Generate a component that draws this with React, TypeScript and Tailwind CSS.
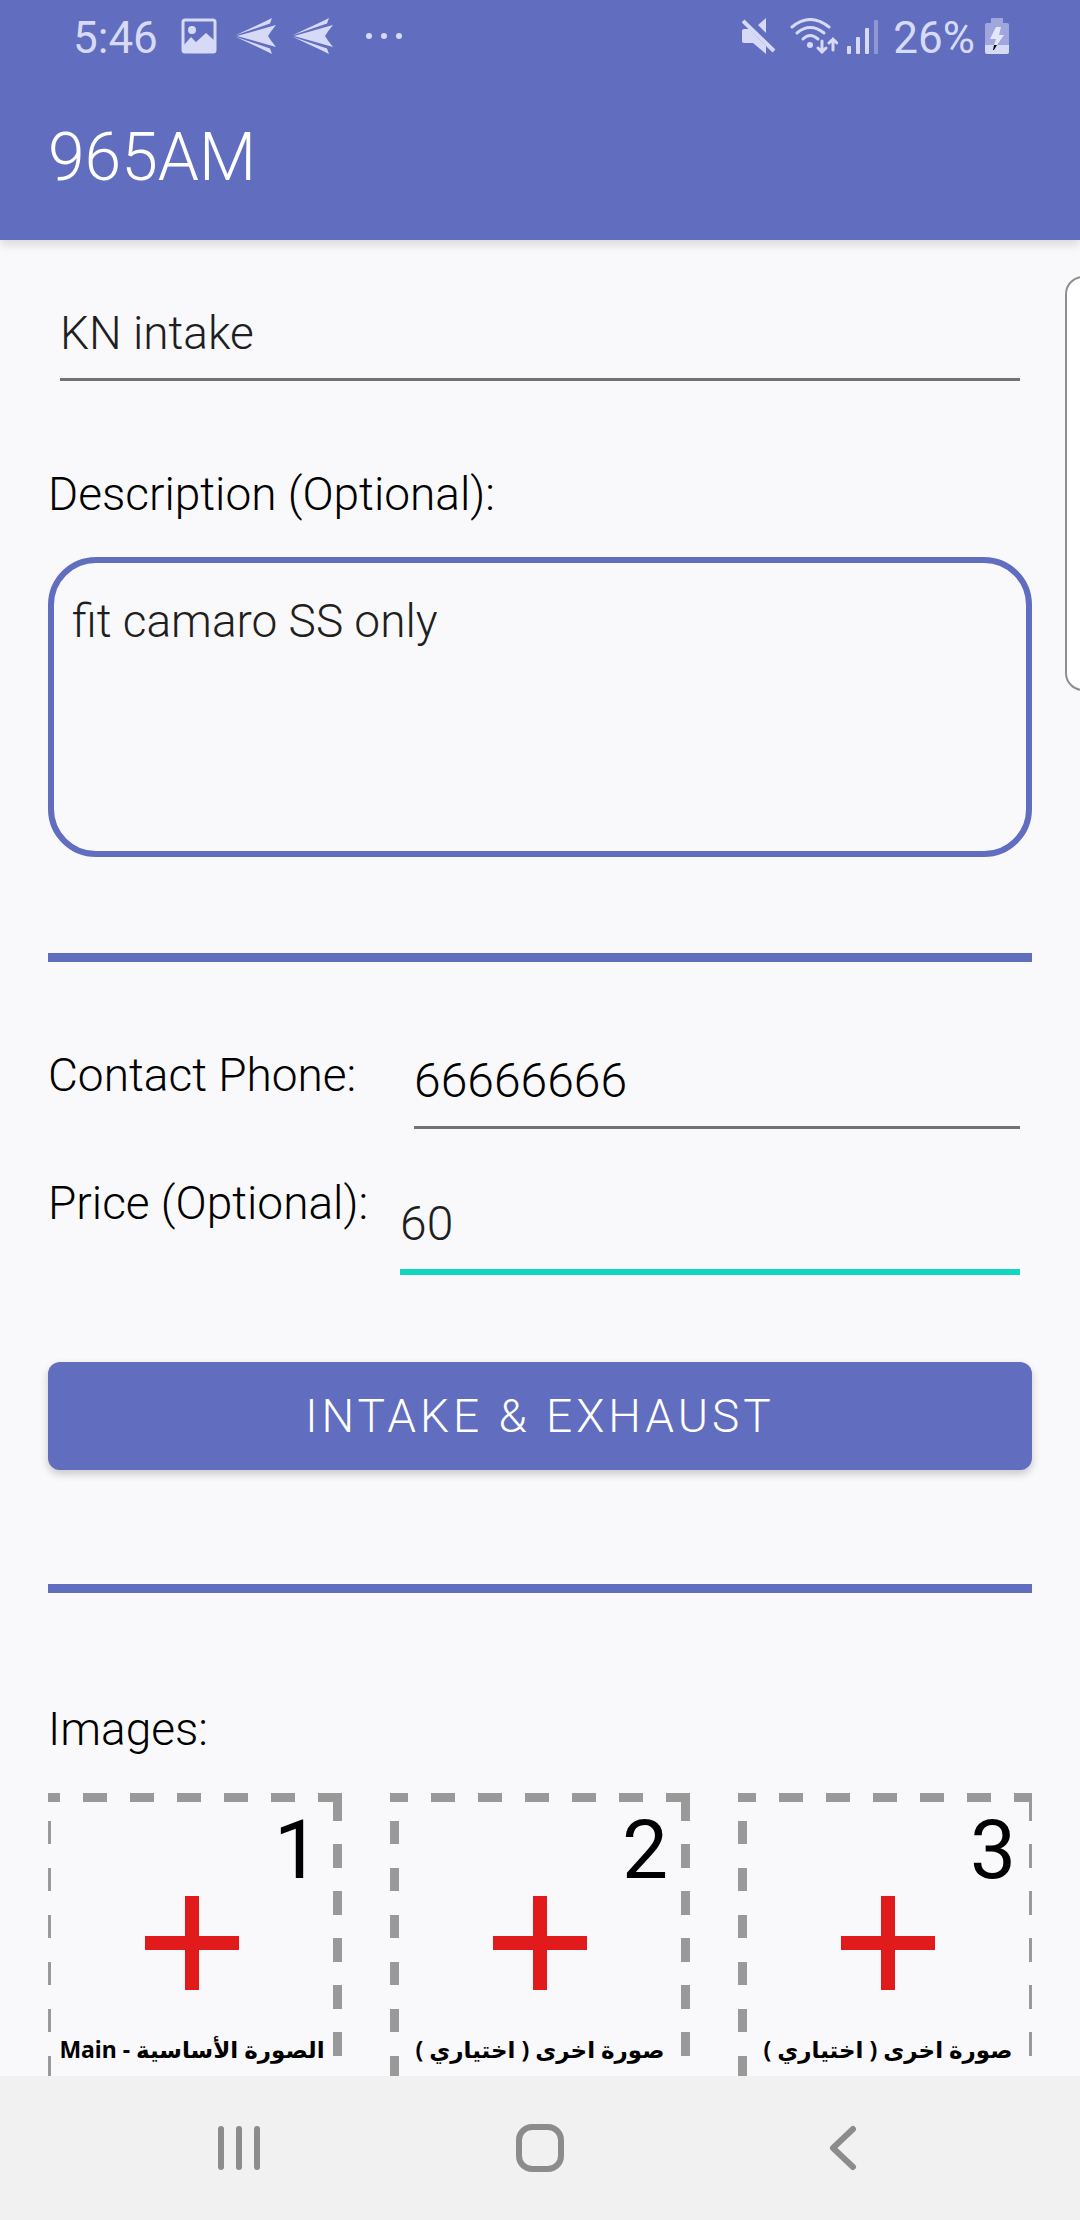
import { useState } from 'react';

const labelClass = 'text-[46px] leading-[56px] font-light text-black';

const SendIcon = () => (
	<svg className="h-9 w-[41px]" viewBox="0 0 41 36" fill="currentColor">
		<path d="M0 17.5L30 3.5L37 0L35 5.5Z" />
		<path d="M2 18L41 7Q36 13 33 18Q36 23 41 29Z" />
		<path d="M0 18.5L30 32.5L37 36L35 30.5Z" />
	</svg>
);

const StatusBar = () => (
	<div className="flex h-[72px] items-center justify-between pl-[73px] pr-[71px] text-[44px] text-[#d7daf6]">
		<div className="flex items-center">
			<span className="w-[108px] pt-1 leading-[52px]">5:46</span>
			<svg className="h-9 w-9" viewBox="0 0 36 36">
				<rect x="2" y="2" width="32" height="32" rx="2" fill="none" stroke="currentColor" strokeWidth="3" />
				<circle cx="11" cy="12" r="4" fill="currentColor" />
				<path fill="currentColor" d="M3 27L10 19L15 24L25 15L34 23V34H3Z" />
			</svg>
			<div className="ml-[18px] flex gap-4">
				<SendIcon />
				<SendIcon />
			</div>
			<svg className="ml-8 h-9 w-[38px]" viewBox="0 0 38 36" fill="currentColor">
				<circle cx="4" cy="18" r="3" />
				<circle cx="19" cy="18" r="3" />
				<circle cx="34" cy="18" r="3" />
			</svg>
		</div>
		<div className="flex items-center">
			<svg className="h-9 w-[34px]" viewBox="0 0 34 36">
				<path fill="currentColor" d="M0 13Q0 11 2 11H7L24 28V36L11 25H2Q0 25 0 23Z" />
				<path fill="currentColor" d="M16 7L24 0V15Z" />
				<path stroke="currentColor" strokeWidth="4" d="M1 3L32 33" />
			</svg>
			<svg className="ml-[14px] h-9 w-12" viewBox="0 0 48 36" fill="none" stroke="currentColor" strokeWidth="3" strokeLinecap="round">
				<path d="M2 9Q20 -6 39 9" />
				<path d="M7 15Q20 4 34 15" />
				<path d="M13 21Q20 14 28 21" />
				<circle cx="20" cy="27" r="3" fill="currentColor" stroke="none" />
				<path d="M32 23V34M28 30L32 34L36 30M43 32V21M39 25L43 21L47 25" />
			</svg>
			<svg className="ml-[9px] h-9 w-8" viewBox="0 0 32 36" fill="currentColor">
				<rect x="0" y="28" width="4" height="8" rx="1" />
				<rect x="9" y="19" width="4" height="17" rx="1" />
				<rect x="18" y="10" width="4" height="26" rx="1" />
				<rect x="27" y="2" width="4" height="34" rx="1" opacity="0.4" />
			</svg>
			<span className="ml-[14px] mr-[10px] pt-1 leading-[52px]">26%</span>
			<svg className="h-9 w-6" viewBox="0 0 24 36">
				<path fill="#9fa7dc" d="M6 0H18V5H22Q24 5 24 7V27H0V7Q0 5 2 5H6Z" />
				<path fill="currentColor" d="M0 27H24V34Q24 36 22 36H2Q0 36 0 34Z" />
				<path fill="#e4e7fb" d="M11 9H16L14 17H19L12 27H9L11 21H5Z" />
				<path fill="#111" d="M9 27H12L9 32H8Z" />
			</svg>
		</div>
	</div>
);

const Divider = () => <hr className="h-[9px] border-0 bg-[#616dbf]" />;

// dashes are 24px long with a 23px gap, starting from the right edge
const ImageSlot = ({ number, caption, dir }: { number: number; caption: string; dir: 'ltr' | 'rtl' }) => (
	<button type="button" className="grid w-[300px] shrink-0 text-black">
		<svg className="col-start-1 row-start-1 h-[300px] w-[300px]" viewBox="0 0 300 300" stroke="#999999" strokeWidth="9">
			<path strokeDasharray="24 23" d="M300 4.500H0" />
			<path strokeDasharray="24 23" strokeDashoffset="-4" d="M295.500 0V300" />
			<path d="M295.500 0V28" />
			<path strokeDasharray="23 24" d="M4.500 28V300" />
			<path stroke="#e11b1b" strokeWidth="14" d="M103 150H197M150 103V197" />
		</svg>
		<span className="col-start-1 row-start-1 flex flex-col justify-between pt-4 pb-7">
			<span className="pr-[22px] text-right text-[82px] leading-none">{number}</span>
			<span dir={dir} className="text-center font-['Noto_Sans','DejaVu_Sans',sans-serif] text-[23px] leading-8 font-bold">
				{caption}
			</span>
		</span>
	</button>
);

const slots = [
	{ number: 1, caption: 'Main - الصورة الأساسية', dir: 'ltr' as const },
	{ number: 2, caption: 'صورة اخرى ( اختياري )', dir: 'rtl' as const },
	{ number: 3, caption: 'صورة اخرى ( اختياري )', dir: 'rtl' as const },
];

const NavBar = () => (
	<nav className="flex h-36 shrink-0 items-center justify-between bg-[#f1f1f1] px-[215px] text-[#8c8c8c]">
		<button type="button" aria-label="Recent apps">
			<svg className="h-12 w-12" viewBox="0 0 48 48" stroke="currentColor" strokeWidth="6" strokeLinecap="round">
				<path d="M6 5V43M24 5V43M42 5V43" />
			</svg>
		</button>
		<button type="button" aria-label="Home">
			<svg className="h-12 w-12" viewBox="0 0 48 48" fill="none" stroke="currentColor" strokeWidth="6">
				<rect x="3" y="3" width="42" height="42" rx="13" />
			</svg>
		</button>
		<button type="button" aria-label="Back">
			<svg className="h-12 w-12" viewBox="0 0 48 48" fill="none" stroke="currentColor" strokeWidth="6" strokeLinecap="round" strokeLinejoin="round">
				<path d="M36 5L16 24L36 43" />
			</svg>
		</button>
	</nav>
);

export default function App() {
	const [name, setName] = useState('KN intake');
	const [description, setDescription] = useState('fit camaro SS only');
	const [phone, setPhone] = useState('66666666');
	const [price, setPrice] = useState('60');

	return (
		<div className="relative flex h-screen flex-col overflow-hidden bg-[#f9f9fc] font-['Roboto',sans-serif]">
			<header className="z-10 shrink-0 bg-[#616dbf] shadow-[0_4px_10px_rgba(0,0,0,0.14)]">
				<StatusBar />
				<div className="flex h-[168px] items-center px-12 pt-1">
					<h1 className="text-[66px] leading-[80px] font-light text-white">965AM</h1>
				</div>
			</header>

			<main className="min-h-0 flex-1 overflow-hidden px-12 pt-15">
				<div className="px-3">
					<input
						aria-label="Title"
						className="block h-[81px] w-full border-b-[3px] border-[#727275] pb-3 text-[46px] font-light text-[#1f1f21] outline-none"
						value={name}
						onChange={(e) => setName(e.target.value)}
					/>
				</div>

				<label htmlFor="description" className={`mt-[85px] block ${labelClass}`}>
					Description (Optional):
				</label>
				<textarea
					id="description"
					className="mt-[35px] mb-24 block h-[300px] w-full resize-none rounded-[48px] border-6 border-[#616dbf] px-[18px] py-[30px] text-[46px] leading-[56px] font-light text-[#1f1f21] outline-none"
					value={description}
					onChange={(e) => setDescription(e.target.value)}
				/>

				<Divider />

				<div className="mt-[85px] flex pr-3">
					<label htmlFor="phone" className={`w-[366px] shrink-0 ${labelClass}`}>
						Contact Phone:
					</label>
					<input
						id="phone"
						type="tel"
						className="h-[82px] min-w-0 flex-1 border-b-[3px] border-[#727275] pb-3 text-[48px] font-light text-black outline-none"
						value={phone}
						onChange={(e) => setPhone(e.target.value)}
					/>
				</div>

				<div className="mt-[46px] flex pr-3">
					<label htmlFor="price" className={`w-[352px] shrink-0 ${labelClass}`}>
						Price (Optional):
					</label>
					<input
						id="price"
						inputMode="decimal"
						className="mt-4 h-[84px] min-w-0 flex-1 border-b-6 border-[#12d6c0] pb-[14px] text-[48px] font-light text-[#1f1f21] outline-none"
						value={price}
						onChange={(e) => setPrice(e.target.value)}
					/>
				</div>

				<button
					type="button"
					className="mt-[87px] mb-[114px] block h-[108px] w-full rounded-xl bg-[#616dbf] text-[46px] font-light tracking-[4px] text-white shadow-[0_4px_8px_rgba(0,0,0,0.2)]"
				>
					INTAKE &amp; EXHAUST
				</button>

				<Divider />

				<h2 className={`mt-[108px] ${labelClass}`}>Images:</h2>
				<div className="mt-9 flex justify-center gap-12 overflow-hidden">
					{slots.map((slot) => (
						<ImageSlot key={slot.number} {...slot} />
					))}
				</div>
			</main>

			{/* edge panel handle */}
			<div className="absolute top-[276px] -right-8 h-[415px] w-[47px] rounded-[18px] border-2 border-[#8f8f8f] bg-white" />

			<NavBar />
		</div>
	);
}
